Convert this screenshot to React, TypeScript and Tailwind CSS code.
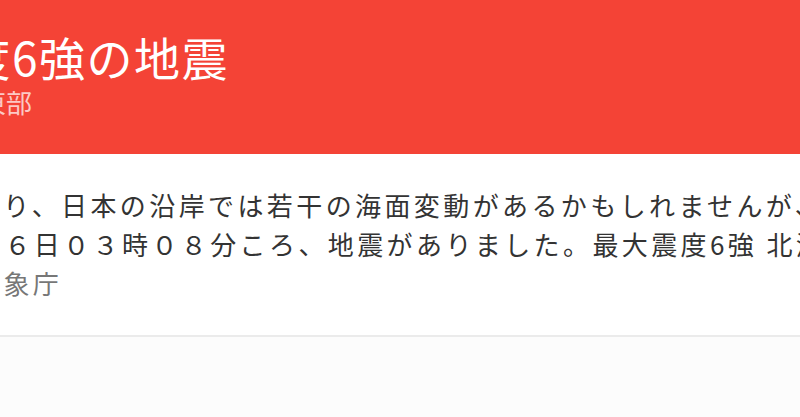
export default function App() {
  const font = { fontFamily: '"Noto Sans CJK JP", "Noto Sans", sans-serif' };
  return (
    <div className="w-[800px] h-[417px] overflow-hidden bg-[#fcfcfc]" style={font}>
      <div className="bg-white border-b-2 border-[#ebebeb]">
        <div className="h-[154px] bg-[#f44336] pt-[33px] whitespace-nowrap">
          <div className="ml-[-83px] text-[46px] leading-none tracking-[1.5px] text-white">震度6強の地震</div>
          <div className="ml-[-20px] mt-[10px] text-[26px] leading-none text-[#fcc9c5]">東部</div>
        </div>
        <div className="pt-[31px] pb-[33px] whitespace-nowrap text-[26px] leading-[39px] tracking-[3.4px]">
          <div className="ml-[-55px] text-[#333333]">により、日本の沿岸では若干の海面変動があるかもしれませんが、被害の心配はありません。</div>
          <div className="ml-[-25px] text-[#333333]">　６日０３時０８分ころ、地震がありました。最大震度6強 北海道胆振地方中東部</div>
          <div className="ml-[-26px] text-[#777777]">気象庁</div>
        </div>
      </div>
    </div>
  );
}
